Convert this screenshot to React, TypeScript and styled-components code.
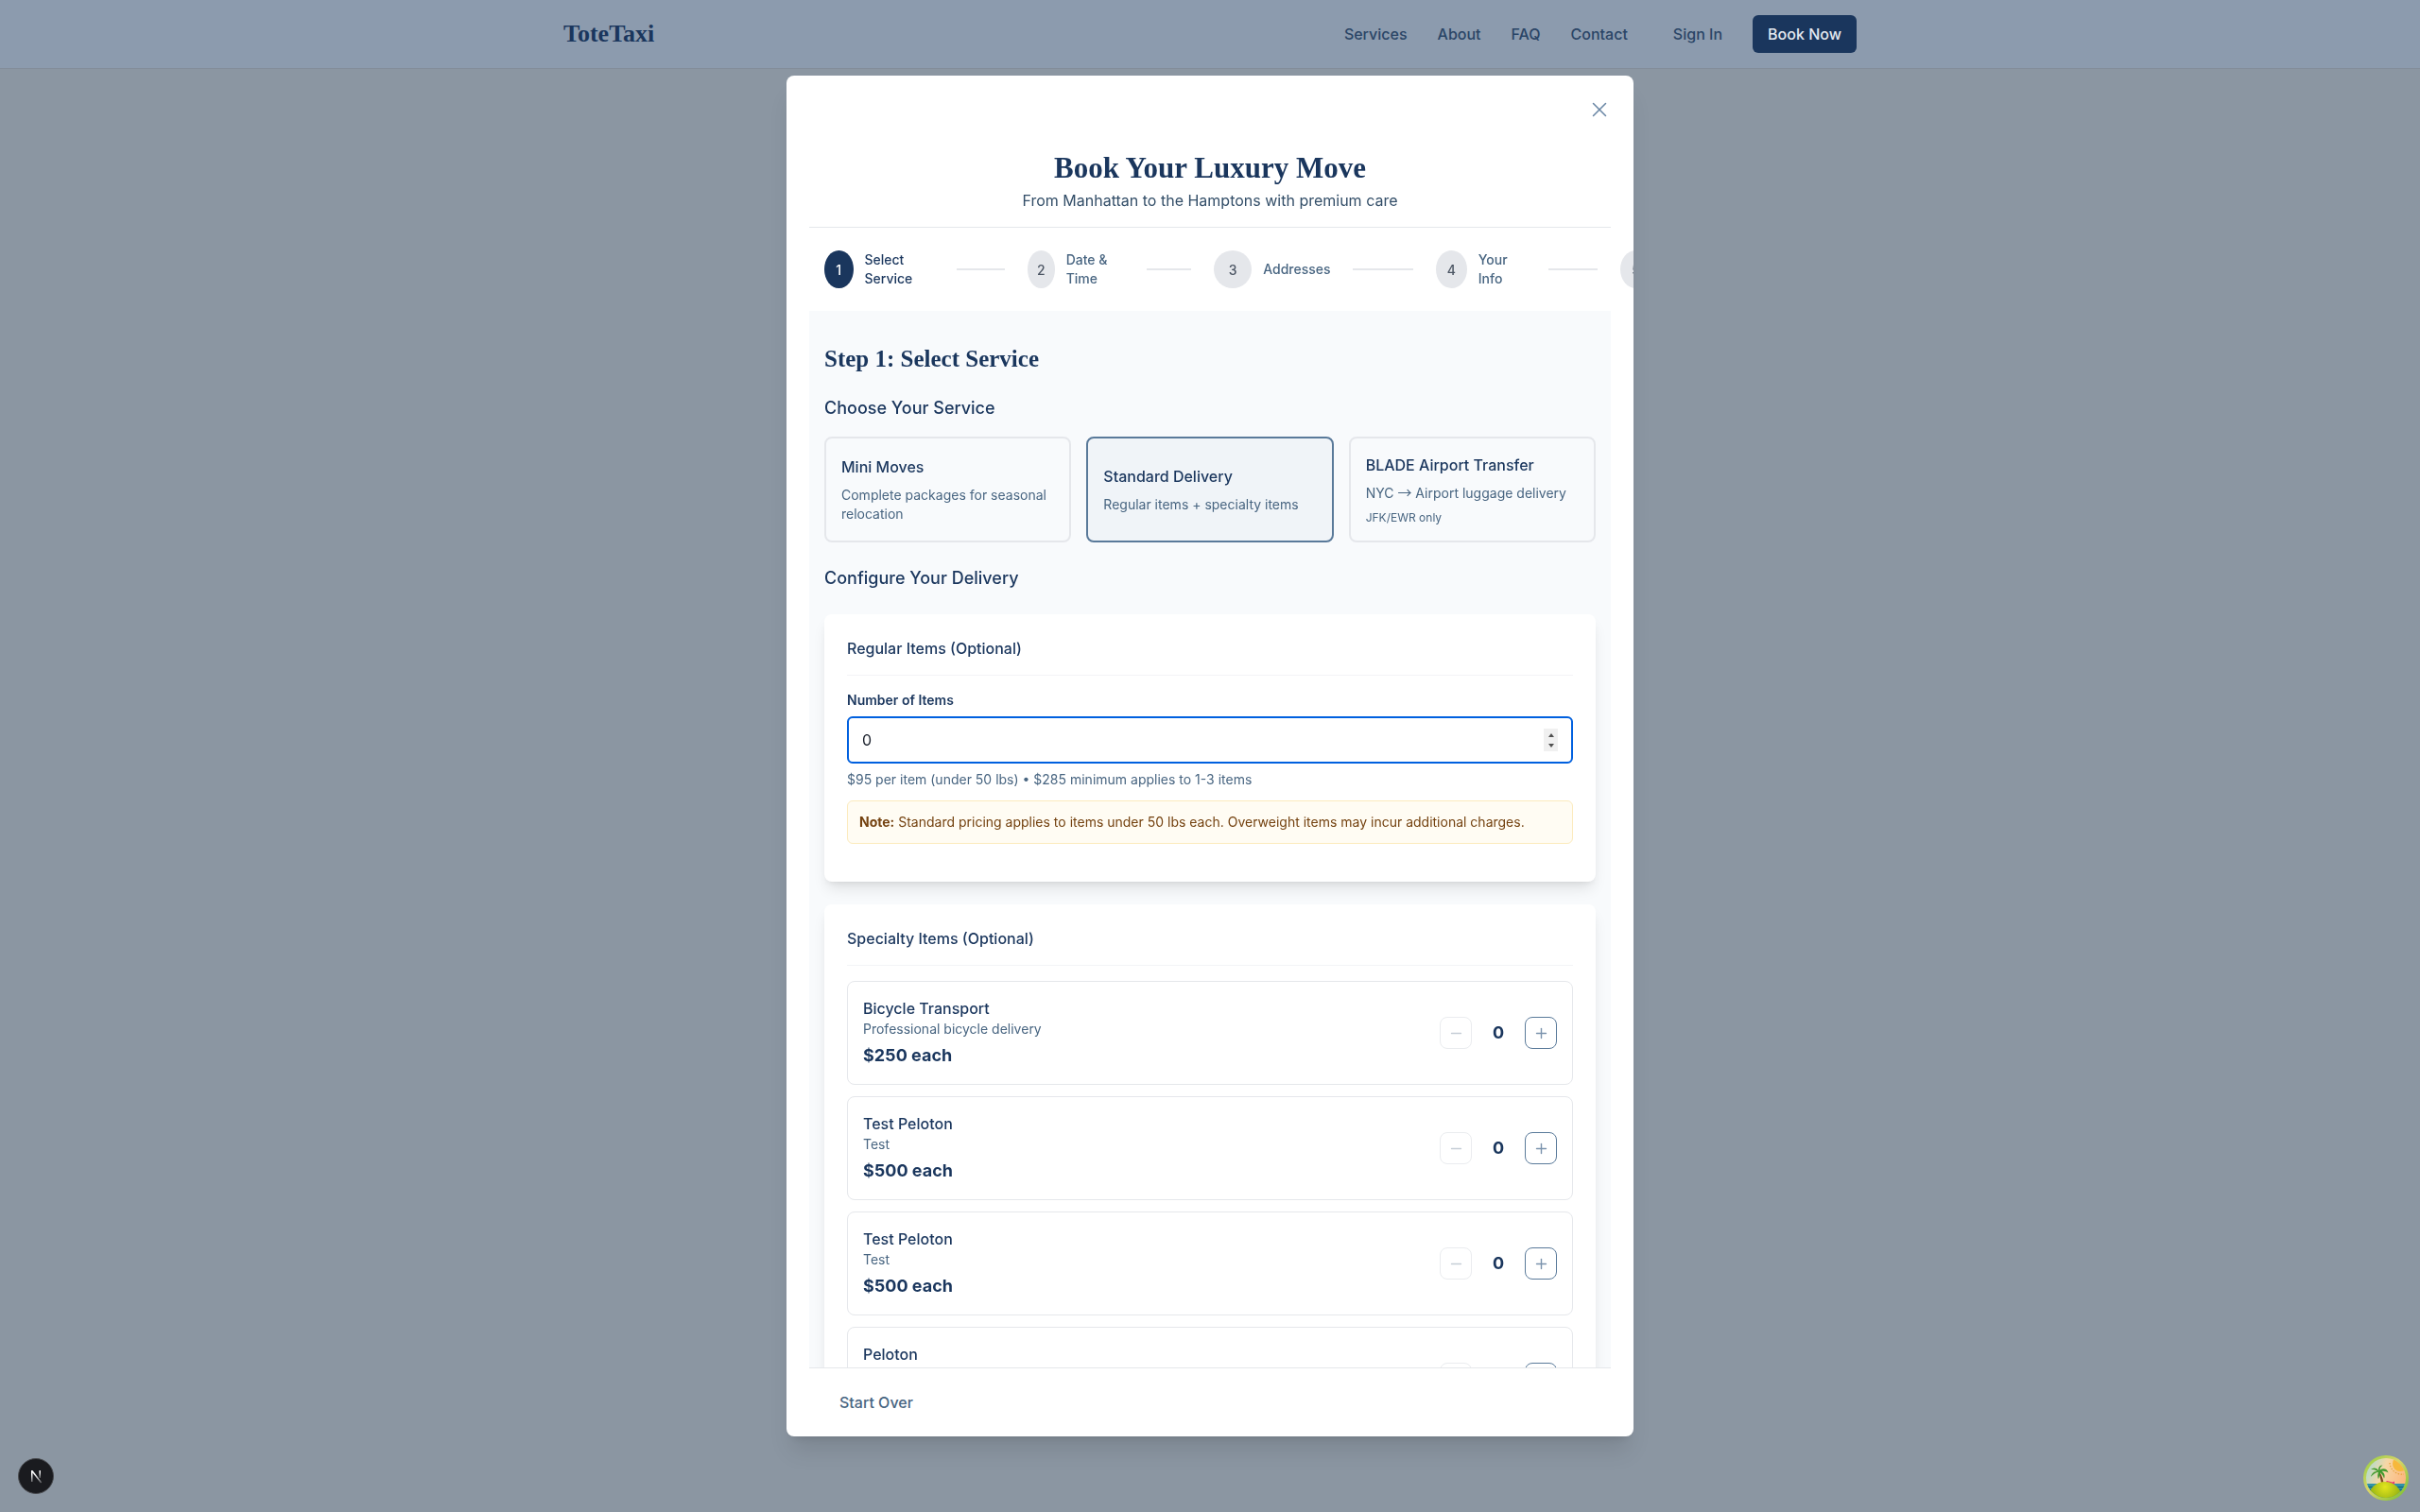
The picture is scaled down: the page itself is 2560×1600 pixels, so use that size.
import React from "react";
import styled, { createGlobalStyle } from "styled-components";
import { Plus, Minus, X } from "lucide-react";

const navy = "#1a365d";
const slate = "#486581";

const GlobalStyle = createGlobalStyle`
  html, body {
    margin: 0;
    padding: 0;
    height: 100%;
    background: #8b96a2;
    font-family: Inter, "Noto Sans", sans-serif;
    color: ${navy};
  }
  * { box-sizing: border-box; }
`;

const Page = styled.div`
  height: 1600px;
  overflow: hidden;
`;

const Nav = styled.header`
  height: 73px;
  background: #8c9bae;
  border-bottom: 1px solid #838d9a;
`;

const NavInner = styled.div`
  max-width: 1400px;
  height: 72px;
  margin: 0 auto;
  padding: 0 16px;
  display: flex;
  align-items: center;
  justify-content: space-between;
`;

const Logo = styled.div`
  font-family: "Liberation Serif", serif;
  font-size: 26px;
  font-weight: 700;
`;

const NavLinks = styled.nav`
  display: flex;
  align-items: center;
  gap: 32px;
`;

const NavLink = styled.a`
  font-size: 16px;
  font-weight: 500;
  color: #2a4566;
`;

const NavActions = styled.div`
  display: flex;
  align-items: center;
  gap: 16px;
`;

const SignIn = styled.button`
  height: 40px;
  padding: 0 16px;
  background: none;
  border: 0;
  font: 500 16px Inter, sans-serif;
  color: #2a4566;
`;

const BookNow = styled.button`
  width: 110px;
  height: 40px;
  background: ${navy};
  border: 0;
  border-radius: 6px;
  font: 500 16px Inter, sans-serif;
  color: #e4e9f0;
`;

const Overlay = styled.div`
  position: fixed;
  inset: 0;
  padding-top: 80px;
  display: flex;
  justify-content: center;
  align-items: flex-start;
`;

const Modal = styled.div`
  position: relative;
  width: 896px;
  height: 1440px;
  background: #fff;
  border-radius: 8px;
  box-shadow: 0 20px 25px -5px rgba(0, 0, 0, 0.1), 0 8px 10px -6px rgba(0, 0, 0, 0.1);
  padding: 0 24px;
  display: flex;
  flex-direction: column;
  overflow: hidden;
`;

const CloseButton = styled.button`
  position: absolute;
  top: 22px;
  right: 22px;
  width: 28px;
  height: 28px;
  padding: 0;
  background: none;
  border: 0;
  color: #6b87a6;
  display: flex;
  align-items: center;
  justify-content: center;
`;

const ModalHeader = styled.div`
  padding-top: 80px;
  padding-bottom: 16px;
  border-bottom: 1px solid #e5e7eb;
  text-align: center;
`;

const ModalTitle = styled.h1`
  margin: 0;
  font-family: "Liberation Serif", serif;
  font-size: 31px;
  line-height: 36px;
  font-weight: 700;
`;

const ModalSubtitle = styled.p`
  margin: 4px 0 0;
  font-size: 16px;
  line-height: 24px;
  color: #334e68;
`;

const Stepper = styled.div`
  height: 88px;
  padding-left: 16px;
  display: flex;
  align-items: center;
  flex-shrink: 0;
  width: 900px;
`;

const StepDot = styled.div<{ $w: number; $active?: boolean }>`
  width: ${(p) => p.$w}px;
  height: 40px;
  flex-shrink: 0;
  border-radius: 50%;
  background: ${(p) => (p.$active ? navy : "#e5e7eb")};
  color: ${(p) => (p.$active ? "#fff" : "#4b5563")};
  font-size: 14px;
  font-weight: 500;
  display: flex;
  align-items: center;
  justify-content: center;
`;

const StepLabel = styled.div<{ $w: number; $active?: boolean }>`
  width: ${(p) => p.$w}px;
  margin-left: 12px;
  flex-shrink: 0;
  font-size: 14px;
  line-height: 20px;
  font-weight: 500;
  color: ${(p) => (p.$active ? navy : slate)};
`;

const StepLine = styled.div<{ $w: number; $ml: number }>`
  width: ${(p) => p.$w}px;
  margin: 0 24px 0 ${(p) => p.$ml}px;
  height: 2px;
  flex-shrink: 0;
  background: #e5e7eb;
`;

const Body = styled.div`
  flex: 1;
  min-height: 0;
  overflow: hidden;
  background: #f8fafc;
  padding: 36px 16px 0;
`;

const StepTitle = styled.h2`
  margin: 0 0 24px;
  font-family: "Liberation Serif", serif;
  font-size: 25px;
  line-height: 29px;
  font-weight: 700;
`;

const SectionTitle = styled.h3<{ $mb: number }>`
  margin: 0 0 ${(p) => p.$mb}px;
  font-size: 18px;
  line-height: 28px;
  font-weight: 500;
`;

const ServiceGrid = styled.div`
  display: grid;
  grid-template-columns: repeat(3, 1fr);
  gap: 16px;
  margin-bottom: 24px;
`;

const ServiceCard = styled.div<{ $selected?: boolean }>`
  border: 2px solid ${(p) => (p.$selected ? "#5a7a9a" : "#e5e7eb")};
  background: ${(p) => (p.$selected ? "#f0f4f8" : "transparent")};
  border-radius: 8px;
  padding: 16px;
  display: flex;
  flex-direction: column;
  justify-content: center;
`;

const ServiceName = styled.div`
  font-size: 16px;
  line-height: 24px;
  font-weight: 500;
`;

const ServiceDesc = styled.div`
  margin-top: 8px;
  font-size: 14px;
  line-height: 20px;
  color: ${slate};
`;

const ArrowGlyph = styled.span`
  font-family: "Noto Sans CJK SC", sans-serif;
  font-size: 15px;
  line-height: 0;
`;

const ServiceNote = styled.div`
  margin-top: 8px;
  font-size: 12px;
  line-height: 16px;
  color: ${slate};
`;

const Panel = styled.section<{ $bottom: number }>`
  background: #fff;
  border-radius: 8px;
  padding: 24px 24px ${(p) => p.$bottom}px;
  margin-bottom: 24px;
  box-shadow: 0 10px 15px -3px rgba(0, 0, 0, 0.1), 0 4px 6px -4px rgba(0, 0, 0, 0.1);
`;

const PanelTitle = styled.h4`
  margin: 0 0 16px;
  padding-bottom: 16px;
  border-bottom: 1px solid #f3f4f6;
  font-size: 16px;
  line-height: 24px;
  font-weight: 500;
`;

const FieldLabel = styled.label`
  display: block;
  margin-bottom: 7px;
  font-size: 14px;
  line-height: 20px;
  font-weight: 600;
`;

const InputWrap = styled.div`
  position: relative;
`;

const NumberInput = styled.input`
  display: block;
  width: 100%;
  height: 50px;
  padding: 0 15px;
  border: 1px solid #d1d5db;
  border-radius: 6px;
  outline: 2px solid #0060df;
  outline-offset: -2px;
  font: 400 16px Inter, sans-serif;
  color: #1a202c;
  background: #fff;
  appearance: textfield;

  &::-webkit-inner-spin-button,
  &::-webkit-outer-spin-button {
    appearance: none;
    margin: 0;
  }
`;

const SpinBox = styled.div`
  position: absolute;
  top: 13px;
  right: 16px;
  width: 15px;
  height: 24px;
  background: #f0f0f0;
  display: flex;
  flex-direction: column;
  align-items: center;
  justify-content: center;
  gap: 7px;
`;

const SpinArrow = styled.span<{ $down?: boolean }>`
  width: 0;
  height: 0;
  border-left: 3.5px solid transparent;
  border-right: 3.5px solid transparent;
  ${(p) => (p.$down ? "border-top: 4px solid #505050;" : "border-bottom: 4px solid #505050;")}
`;

const Hint = styled.p`
  margin: 7px 0 12px;
  font-size: 14px;
  line-height: 20px;
  color: ${slate};
`;

const NoteBox = styled.div`
  padding: 12px;
  background: #fffcf3;
  border: 1px solid #fcebbd;
  border-radius: 6px;
  font-size: 14px;
  line-height: 20px;
  color: #744210;

  strong {
    font-weight: 700;
  }
`;

const ItemList = styled.div`
  display: flex;
  flex-direction: column;
  gap: 12px;
`;

const ItemRow = styled.div`
  display: flex;
  align-items: center;
  justify-content: space-between;
  padding: 16px;
  border: 1px solid #e5e7eb;
  border-radius: 8px;
`;

const ItemName = styled.div`
  font-size: 16px;
  line-height: 24px;
  font-weight: 500;
`;

const ItemDesc = styled.div`
  font-size: 14px;
  line-height: 20px;
  color: ${slate};
`;

const ItemPrice = styled.div`
  margin-top: 4px;
  font-size: 18px;
  line-height: 28px;
  font-weight: 700;
`;

const Counter = styled.div`
  display: flex;
  align-items: center;
  gap: 12px;
`;

const CountButton = styled.button<{ $disabled?: boolean }>`
  width: 34px;
  height: 34px;
  padding: 0;
  background: #fff;
  border: 1px solid ${(p) => (p.$disabled ? "#eaecef" : "#5a7a9a")};
  border-radius: 8px;
  color: ${(p) => (p.$disabled ? "#c5cdd6" : "#7b93ad")};
  display: flex;
  align-items: center;
  justify-content: center;
`;

const CountValue = styled.span`
  width: 32px;
  text-align: center;
  font-size: 18px;
  line-height: 28px;
  font-weight: 700;
`;

const Footer = styled.div`
  height: 73px;
  flex-shrink: 0;
  border-top: 1px solid #e5e7eb;
  background: #fff;
  padding-left: 16px;
  display: flex;
  align-items: center;
`;

const StartOver = styled.button`
  padding: 0;
  background: none;
  border: 0;
  font: 500 16px Inter, sans-serif;
  color: ${slate};
  margin-left: 16px;
`;

const DevBadge = styled.div`
  position: fixed;
  left: 19px;
  bottom: 19px;
  width: 38px;
  height: 38px;
`;

const QueryBadge = styled.div`
  position: fixed;
  right: 12px;
  bottom: 12px;
  width: 48px;
  height: 48px;
`;

const steps = [
  { n: 1, dot: 30.5, label: "Select Service", labelW: 60, lineMl: 37.7, line: 51 },
  { n: 2, dot: 28.5, label: "Date & Time", labelW: 60, lineMl: 25.5, line: 47 },
  { n: 3, dot: 40, label: "Addresses", labelW: 72, lineMl: 22.6, line: 64 },
  { n: 4, dot: 33, label: "Your Info", labelW: 40, lineMl: 34.4, line: 52 },
];

const items = [
  { name: "Bicycle Transport", desc: "Professional bicycle delivery", price: "$250 each" },
  { name: "Test Peloton", desc: "Test", price: "$500 each" },
  { name: "Test Peloton", desc: "Test", price: "$500 each" },
  { name: "Peloton", desc: "Peloton", price: "$500 each" },
];

function NextBadge() {
  return (
    <svg width="38" height="38" viewBox="0 0 38 38">
      <defs>
        <linearGradient id="nfade" x1="0" y1="0" x2="0" y2="1">
          <stop offset="0.3" stopColor="#fff" />
          <stop offset="1" stopColor="#fff" stopOpacity="0.25" />
        </linearGradient>
      </defs>
      <circle cx="19" cy="19" r="18.5" fill="#1a1b1f" stroke="#4a4c50" strokeWidth="1" />
      <path d="M14 13v12h1.500v-9.400L24 26.500l1.200-.9L15.500 13z" fill="url(#nfade)" />
      <rect x="22.500" y="13" width="1.400" height="8" fill="url(#nfade)" />
    </svg>
  );
}

function IslandBadge() {
  return (
    <svg width="48" height="48" viewBox="0 0 48 48">
      <defs>
        <linearGradient id="ring" x1="0" y1="0" x2="1" y2="1">
          <stop offset="0" stopColor="#8fce3e" />
          <stop offset="0.45" stopColor="#d9d46a" />
          <stop offset="1" stopColor="#6fbf2a" />
        </linearGradient>
        <linearGradient id="sky" x1="0" y1="0" x2="1" y2="0.4">
          <stop offset="0" stopColor="#8fdde0" />
          <stop offset="0.5" stopColor="#f6d7a6" />
          <stop offset="1" stopColor="#fcb57c" />
        </linearGradient>
        <radialGradient id="sand" cx="0.5" cy="0.15" r="0.7">
          <stop offset="0" stopColor="#e3e51c" />
          <stop offset="1" stopColor="#6f9a10" />
        </radialGradient>
        <clipPath id="inner">
          <circle cx="24" cy="24" r="21" />
        </clipPath>
      </defs>
      <circle cx="24" cy="24" r="24" fill="url(#ring)" />
      <g clipPath="url(#inner)">
        <rect width="48" height="48" fill="url(#sky)" />
        <circle cx="39" cy="9" r="8" fill="#f6b83c" />
        <path d="M28 8a13 13 0 0 0 15 12" stroke="#e5a23a" strokeWidth="1.200" strokeDasharray="1.500 1.500" fill="none" />
        <rect y="30" width="48" height="18" fill="#2f93a8" />
        <rect y="33" width="48" height="1.400" fill="#15697f" />
        <rect y="36" width="48" height="1.400" fill="#15697f" />
        <path d="M16 18c2 5 3 10 3.500 15h2.500c-.5-6-2-11-4.500-15z" fill="#7a4a1f" />
        <path d="M17 17c-3-4-6-4.500-9-2 3-.3 5 .3 7 1.800-3 0-6 2-7 6 3-3 5-4.500 8-5-1 2.500-1 5 0 7.500 1-3 2-5.500 2-7 2 2 3.500 4 4 6.500 1.500-3.500 0-6.500-2.500-8 3-.5 5 .2 7 1.700-1-4-5-5.500-9-3 0-2 1-3.500 3-5-3 0-4.500 1.500-4.500 5z" fill="#3f9a2c" />
        <path d="M22 30l3-3 6 1.500 2-1v3z" fill="#e8337a" />
        <ellipse cx="23" cy="46" rx="18" ry="18" fill="url(#sand)" />
      </g>
    </svg>
  );
}

export default function App() {
  return (
    <Page>
      <GlobalStyle />
      <Nav>
        <NavInner>
          <Logo>ToteTaxi</Logo>
          <NavLinks>
            <NavLink>Services</NavLink>
            <NavLink>About</NavLink>
            <NavLink>FAQ</NavLink>
            <NavLink>Contact</NavLink>
            <NavActions>
              <SignIn>Sign In</SignIn>
              <BookNow>Book Now</BookNow>
            </NavActions>
          </NavLinks>
        </NavInner>
      </Nav>
      <Overlay>
        <Modal>
          <CloseButton aria-label="Close">
            <X size={26} strokeWidth={1.4} />
          </CloseButton>
          <ModalHeader>
            <ModalTitle>Book Your Luxury Move</ModalTitle>
            <ModalSubtitle>From Manhattan to the Hamptons with premium care</ModalSubtitle>
          </ModalHeader>
          <Stepper>
            {steps.map((s) => (
              <React.Fragment key={s.n}>
                <StepDot $w={s.dot} $active={s.n === 1}>{s.n}</StepDot>
                <StepLabel $w={s.labelW} $active={s.n === 1}>{s.label}</StepLabel>
                <StepLine $w={s.line} $ml={s.lineMl} />
              </React.Fragment>
            ))}
            <StepDot $w={33}>5</StepDot>
          </Stepper>
          <Body>
            <StepTitle>Step 1: Select Service</StepTitle>
            <SectionTitle $mb={16}>Choose Your Service</SectionTitle>
            <ServiceGrid>
              <ServiceCard>
                <ServiceName>Mini Moves</ServiceName>
                <ServiceDesc>Complete packages for seasonal relocation</ServiceDesc>
              </ServiceCard>
              <ServiceCard $selected>
                <ServiceName>Standard Delivery</ServiceName>
                <ServiceDesc>Regular items + specialty items</ServiceDesc>
              </ServiceCard>
              <ServiceCard>
                <ServiceName>BLADE Airport Transfer</ServiceName>
                <ServiceDesc>NYC <ArrowGlyph>→</ArrowGlyph> Airport luggage delivery</ServiceDesc>
                <ServiceNote>JFK/EWR only</ServiceNote>
              </ServiceCard>
            </ServiceGrid>
            <SectionTitle $mb={24}>Configure Your Delivery</SectionTitle>
            <Panel $bottom={40}>
              <PanelTitle>Regular Items (Optional)</PanelTitle>
              <FieldLabel>Number of Items</FieldLabel>
              <InputWrap>
                <NumberInput type="number" defaultValue={0} />
                <SpinBox>
                  <SpinArrow />
                  <SpinArrow $down />
                </SpinBox>
              </InputWrap>
              <Hint>$95 per item (under 50 lbs) • $285 minimum applies to 1-3 items</Hint>
              <NoteBox>
                <strong>Note:</strong> Standard pricing applies to items under 50 lbs each. Overweight items may incur additional charges.
              </NoteBox>
            </Panel>
            <Panel $bottom={24}>
              <PanelTitle>Specialty Items (Optional)</PanelTitle>
              <ItemList>
                {items.map((item, i) => (
                  <ItemRow key={i}>
                    <div>
                      <ItemName>{item.name}</ItemName>
                      <ItemDesc>{item.desc}</ItemDesc>
                      <ItemPrice>{item.price}</ItemPrice>
                    </div>
                    <Counter>
                      <CountButton $disabled aria-label="Decrease">
                        <Minus size={17} strokeWidth={2} />
                      </CountButton>
                      <CountValue>0</CountValue>
                      <CountButton aria-label="Increase">
                        <Plus size={17} strokeWidth={2} />
                      </CountButton>
                    </Counter>
                  </ItemRow>
                ))}
              </ItemList>
            </Panel>
          </Body>
          <Footer>
            <StartOver>Start Over</StartOver>
          </Footer>
        </Modal>
      </Overlay>
      <DevBadge>
        <NextBadge />
      </DevBadge>
      <QueryBadge>
        <IslandBadge />
      </QueryBadge>
    </Page>
  );
}
